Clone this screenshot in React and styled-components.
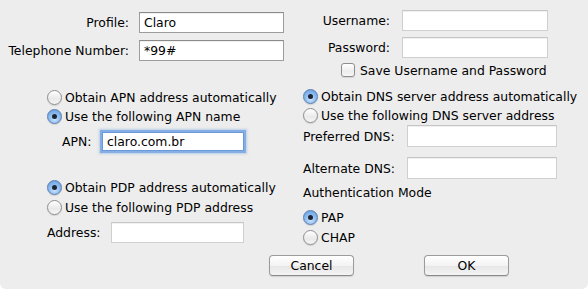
import styled, { createGlobalStyle } from "styled-components";

const GlobalStyle = createGlobalStyle`
  html, body {
    margin: 0;
    padding: 0;
    background: #ffffff;
  }
  body {
    font-family: "DejaVu Sans", "Liberation Sans", sans-serif;
    font-size: 12.4px;
    color: #000;
  }
`;

const Window = styled.div`
  width: 588px;
  height: 289px;
  box-sizing: border-box;
  background: #ededed;
  border-radius: 0 0 6px 6px;
  display: flex;
  flex-direction: column;
`;

const Columns = styled.div`
  display: grid;
  grid-template-columns: 290px 1fr;
  height: 246px;
`;

const Column = styled.div`
  display: flex;
  flex-direction: column;
  padding-top: ${(p) => p.$top}px;
`;

const Row = styled.div`
  display: flex;
  align-items: center;
  height: ${(p) => p.$height || 21}px;
  margin-top: ${(p) => p.$mt || 0}px;
  padding-left: ${(p) => p.$indent || 0}px;
  white-space: nowrap;
`;

const Label = styled.span`
  width: ${(p) => p.$width}px;
  text-align: ${(p) => (p.$right ? "right" : "left")};
  margin-right: ${(p) => p.$gap || 0}px;
  flex: none;
`;

const TextInput = styled.input`
  box-sizing: border-box;
  width: ${(p) => p.$width}px;
  height: ${(p) => p.$height || 21}px;
  margin: 0;
  margin-left: ${(p) => p.$ml || 0}px;
  padding: 0 4px;
  font: inherit;
  color: #000;
  background: #fff;
  outline: none;
  border: 1px solid ${(p) => (p.$muted ? "#cfcfcf" : "#9d9d9d")};
  border-top-color: ${(p) => (p.$muted ? "#c6c6c6" : "#8a8a8a")};
  box-shadow: ${(p) =>
    p.$focused
      ? "0 0 0 2px #84aee4, 0 0 2px 3px rgba(132,174,228,0.5)"
      : "inset 0 1px 0 rgba(0,0,0,0.06)"};
  border-color: ${(p) => (p.$focused ? "#6a98d8" : undefined)};
`;

const RadioDot = styled.span`
  box-sizing: border-box;
  width: 15px;
  height: 15px;
  border-radius: 50%;
  margin-right: 3px;
  flex: none;
  display: flex;
  align-items: center;
  justify-content: center;
  border: 1px solid ${(p) => (p.$checked ? "#5a7db0" : "#8e8e8e")};
  background: ${(p) =>
    p.$checked
      ? "radial-gradient(circle at 50% 70%, #cfe5fd 0%, #8fbdf0 45%, #5f97dd 100%)"
      : "linear-gradient(#ffffff, #e9e9e9 60%, #f6f6f6)"};
  box-shadow: 0 1px 1px rgba(0, 0, 0, 0.12);
  &::after {
    content: "";
    display: ${(p) => (p.$checked ? "block" : "none")};
    width: 5px;
    height: 5px;
    border-radius: 50%;
    background: #1c2533;
  }
`;

const CheckBox = styled.span`
  box-sizing: border-box;
  width: 14px;
  height: 14px;
  border-radius: 3px;
  margin-right: 5px;
  flex: none;
  border: 1px solid #8e8e8e;
  background: linear-gradient(#ffffff, #ececec 60%, #f7f7f7);
  box-shadow: 0 1px 1px rgba(0, 0, 0, 0.1);
`;

const ButtonBar = styled.div`
  display: flex;
  gap: 70px;
  padding-left: 269px;
  margin-top: 9px;
`;

const Button = styled.button`
  box-sizing: border-box;
  width: 85px;
  height: 21px;
  margin: 0;
  padding: 0;
  font: inherit;
  color: #000;
  border: 1px solid #9b9b9b;
  border-bottom-color: #8a8a8a;
  border-radius: 4px;
  background: linear-gradient(#ffffff, #f3f3f3 50%, #e6e6e6 51%, #f4f4f4);
  box-shadow: 0 1px 1px rgba(0, 0, 0, 0.12);
`;

function Radio({ checked, label, indent, height = 19, mt }) {
  return (
    <Row $indent={indent} $height={height} $mt={mt}>
      <RadioDot $checked={checked} />
      <span>{label}</span>
    </Row>
  );
}

export default function App() {
  return (
    <>
      <GlobalStyle />
      <Window>
        <Columns>
          <Column $top={12}>
            <Row>
              <Label $width={129} $right $gap={10}>Profile:</Label>
              <TextInput $width={145} defaultValue="Claro" />
            </Row>
            <Row $mt={7}>
              <Label $width={129} $right $gap={10}>Telephone Number:</Label>
              <TextInput $width={145} defaultValue="*99#" />
            </Row>

            <Radio indent={47} mt={27} label="Obtain APN address automatically" />
            <Radio indent={47} checked label="Use the following APN name" />
            <Row $indent={62} $mt={6} $height={19}>
              <Label $width={40}>APN:</Label>
              <TextInput $width={142} $height={19} $focused defaultValue="claro.com.br" />
            </Row>

            <Radio indent={47} mt={26} height={20} checked label="Obtain PDP address automatically" />
            <Radio indent={47} height={20} label="Use the following PDP address" />
            <Row $indent={47} $mt={5}>
              <Label $width={64}>Address:</Label>
              <TextInput $width={133} $muted />
            </Row>
          </Column>

          <Column $top={10}>
            <Row>
              <Label $width={100} $right $gap={12}>Username:</Label>
              <TextInput $width={146} $muted />
            </Row>
            <Row $mt={6}>
              <Label $width={100} $right $gap={12}>Password:</Label>
              <TextInput $width={146} $muted type="password" />
            </Row>
            <Row $indent={51} $mt={4} $height={16}>
              <CheckBox />
              <span>Save Username and Password</span>
            </Row>

            <Radio indent={13} mt={9} checked label="Obtain DNS server address automatically" />
            <Radio indent={13} label="Use the following DNS server address" />
            <Row $indent={13} $height={22}>
              <Label $width={104}>Preferred DNS:</Label>
              <TextInput $width={150} $height={22} $muted />
            </Row>
            <Row $indent={13} $mt={10} $height={22}>
              <Label $width={104}>Alternate DNS:</Label>
              <TextInput $width={150} $height={22} $muted />
            </Row>
            <Row $indent={13} $mt={4} $height={19}>
              <span>Authentication Mode</span>
            </Row>
            <Radio indent={13} mt={5} height={20} checked label="PAP" />
            <Radio indent={13} height={20} label="CHAP" />
          </Column>
        </Columns>

        <ButtonBar>
          <Button>Cancel</Button>
          <Button>OK</Button>
        </ButtonBar>
      </Window>
    </>
  );
}
